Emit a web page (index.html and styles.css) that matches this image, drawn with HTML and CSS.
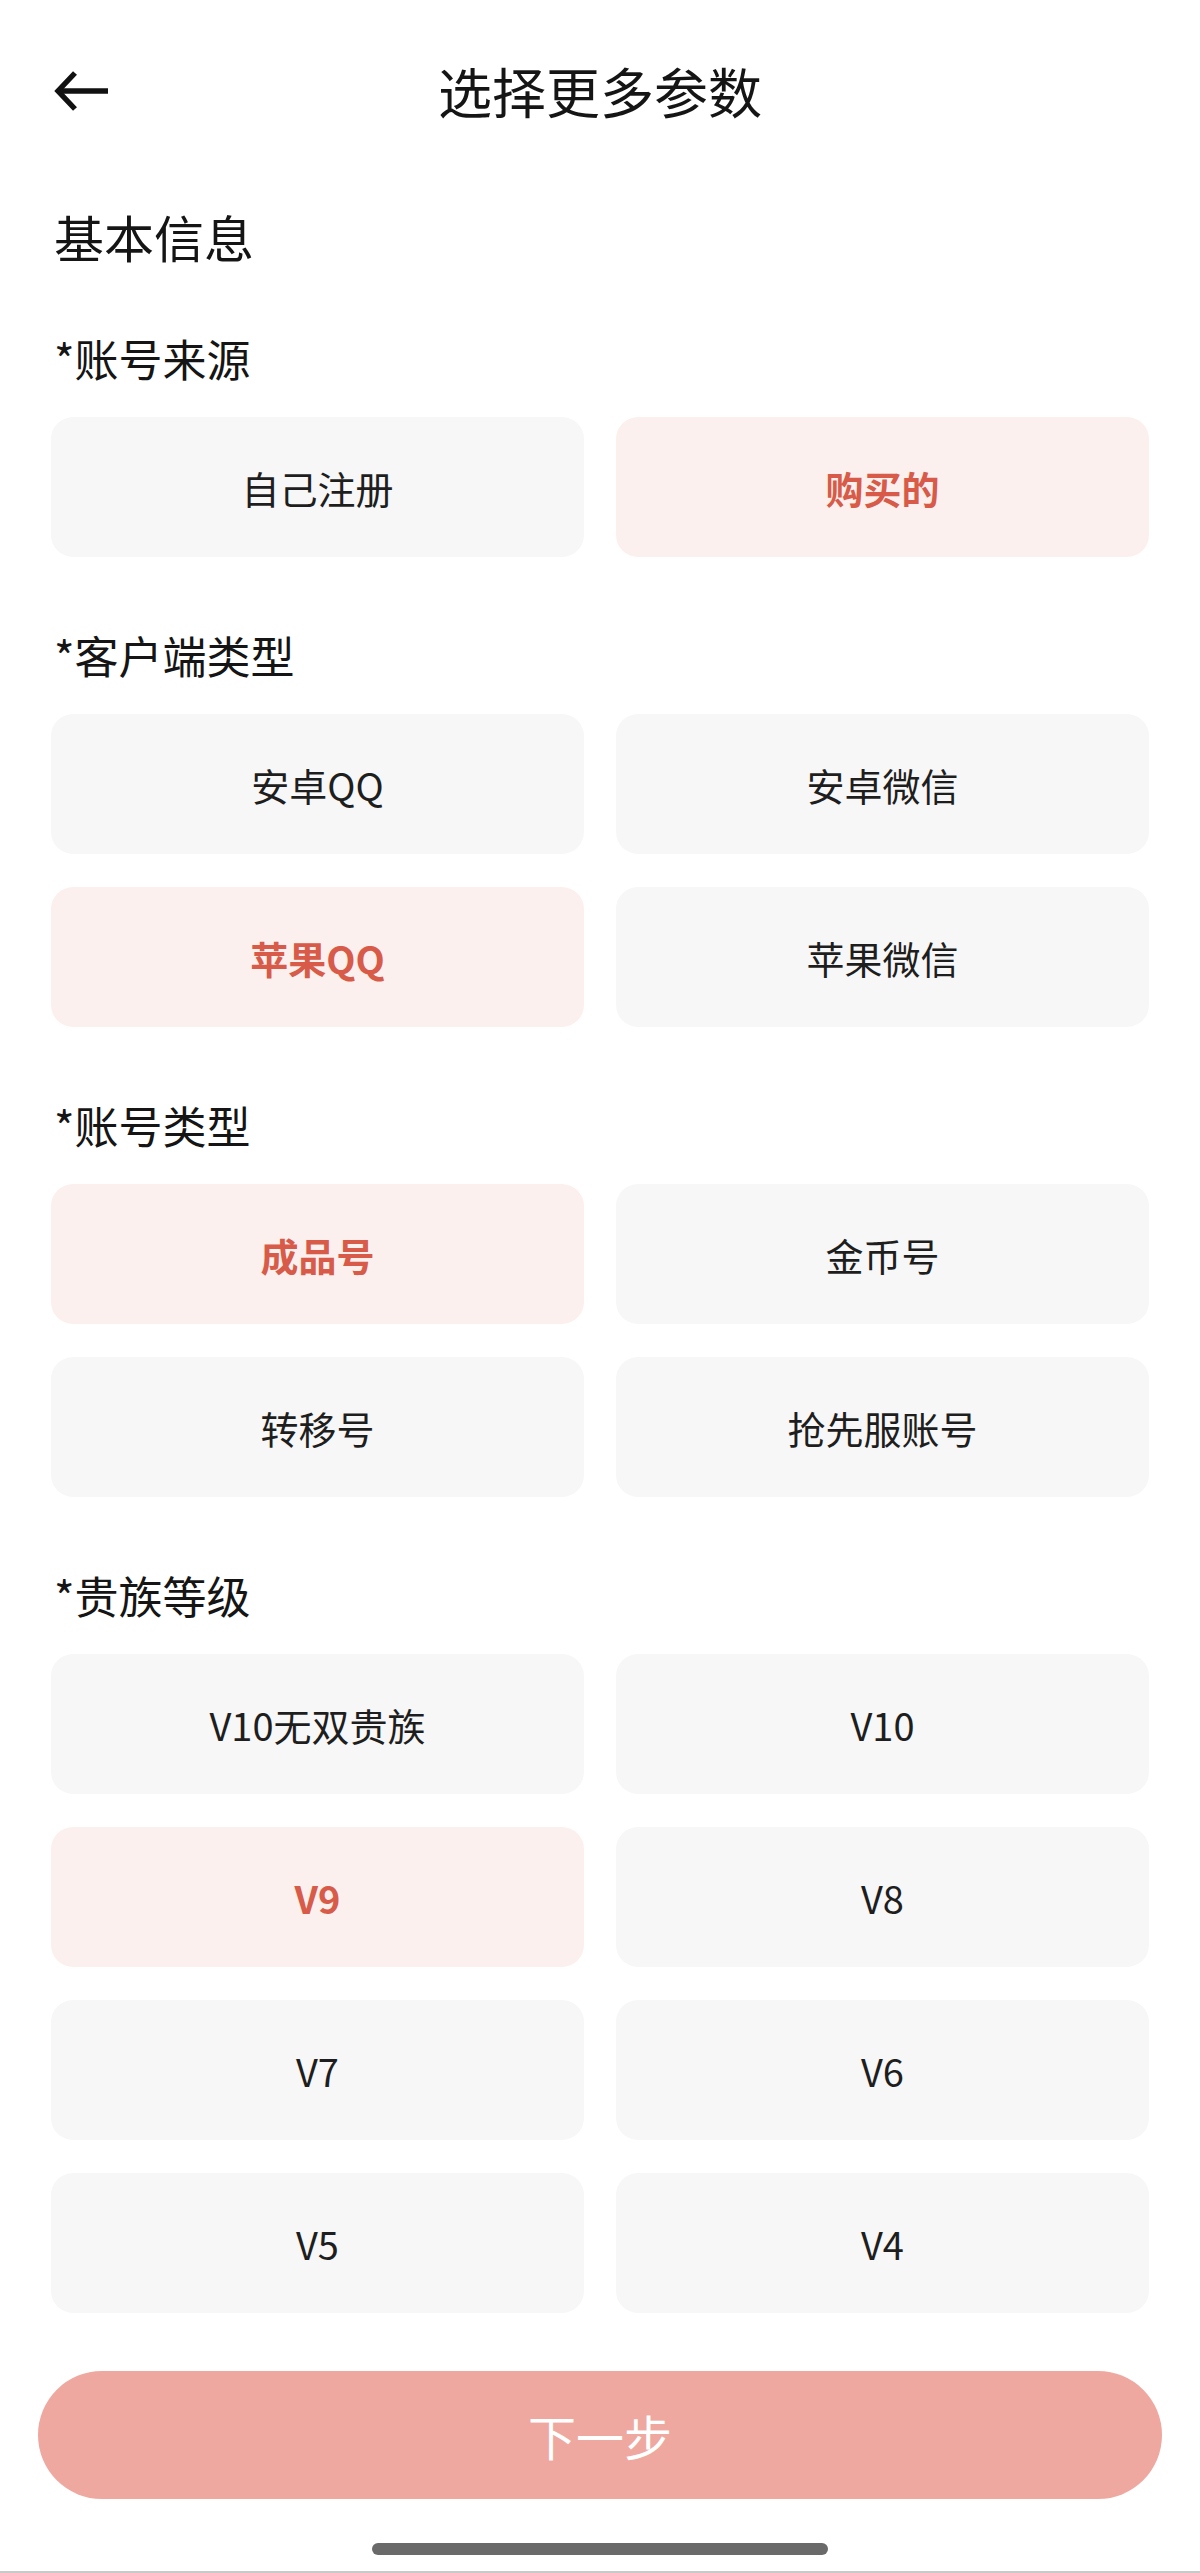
FILE: index.html
```html
<!DOCTYPE html>
<html lang="zh-CN">
<head>
<meta charset="utf-8">
<title>选择更多参数</title>
<link rel="stylesheet" href="styles.css">
</head>
<body>
<div class="page">
  <header class="topbar">
    <div class="back">
      <svg width="56" height="42" viewBox="0 0 56 42" aria-hidden="true">
        <path d="M21 3 L4 21 L21 39" fill="none" stroke="#111" stroke-width="5.4" stroke-linejoin="miter"/>
        <path d="M5 21 H54" fill="none" stroke="#111" stroke-width="5.4"/>
      </svg>
    </div>
    <h1 class="title">选择更多参数</h1>
    <div></div>
  </header>

  <main class="content">
    <h2 class="group-title">基本信息</h2>

    <section class="field">
      <h3 class="field-title">*账号来源</h3>
      <div class="options">
        <div class="opt">自己注册</div>
        <div class="opt selected">购买的</div>
      </div>
    </section>

    <section class="field">
      <h3 class="field-title">*客户端类型</h3>
      <div class="options">
        <div class="opt">安卓QQ</div>
        <div class="opt">安卓微信</div>
        <div class="opt selected">苹果QQ</div>
        <div class="opt">苹果微信</div>
      </div>
    </section>

    <section class="field">
      <h3 class="field-title">*账号类型</h3>
      <div class="options">
        <div class="opt selected">成品号</div>
        <div class="opt">金币号</div>
        <div class="opt">转移号</div>
        <div class="opt">抢先服账号</div>
      </div>
    </section>

    <section class="field">
      <h3 class="field-title">*贵族等级</h3>
      <div class="options">
        <div class="opt">V10无双贵族</div>
        <div class="opt">V10</div>
        <div class="opt selected">V9</div>
        <div class="opt">V8</div>
        <div class="opt">V7</div>
        <div class="opt">V6</div>
        <div class="opt">V5</div>
        <div class="opt">V4</div>
      </div>
    </section>
  </main>

  <div class="footer">
    <button class="next">下一步</button>
    <div class="home-indicator"></div>
  </div>
</div>
</body>
</html>
```

FILE: styles.css
```css
html, body {
  margin: 0;
  padding: 0;
  background: #ffffff;
}

body {
  font-family: "Noto Sans CJK SC", "Noto Sans", sans-serif;
  color: #1a1a1a;
}

.page {
  width: 1200px;
  height: 2573px;
  box-sizing: border-box;
  display: flex;
  flex-direction: column;
  border-bottom: 2px solid #c9c9c9;
}

.topbar {
  height: 182px;
  display: grid;
  grid-template-columns: 1fr auto 1fr;
  align-items: center;
  padding: 0 54px;
}

.back {
  display: flex;
  align-items: center;
  height: 42px;
}

.back svg {
  display: block;
}

.title {
  margin: 0;
  font-size: 54px;
  font-weight: 400;
  line-height: 64px;
  color: #151515;
}

.content {
  padding: 0 51px;
}

.group-title {
  margin: 24px 0 0 3px;
  font-size: 50px;
  line-height: 60px;
  font-weight: 400;
  color: #151515;
}

.field {
  margin-top: 70px;
}

.group-title + .field {
  margin-top: 64px;
}

.field-title {
  margin: 0 0 0 3px;
  font-size: 44px;
  line-height: 56px;
  font-weight: 400;
  color: #151515;
}

.options {
  margin-top: 31px;
  display: grid;
  grid-template-columns: 533px 533px;
  column-gap: 32px;
  row-gap: 33px;
}

.opt {
  height: 140px;
  border-radius: 22px;
  background: #f7f7f7;
  display: flex;
  align-items: center;
  justify-content: center;
  font-size: 38px;
  color: #1e1e1e;
  font-weight: 400;
}

.opt.selected {
  background: #fcf0ef;
  color: #d75b48;
  font-weight: 700;
}

.footer {
  margin-top: auto;
  display: flex;
  flex-direction: column;
  align-items: center;
  padding-bottom: 16px;
}

.next {
  width: 1124px;
  height: 128px;
  border: none;
  border-radius: 64px;
  background: #eea8a0;
  color: #ffffff;
  font-family: "Noto Sans CJK SC", "Noto Sans", sans-serif;
  font-size: 48px;
  font-weight: 400;
  padding: 0;
}

.home-indicator {
  margin-top: 44px;
  width: 456px;
  height: 12px;
  border-radius: 6px;
  background: #6a6a6a;
}
```
